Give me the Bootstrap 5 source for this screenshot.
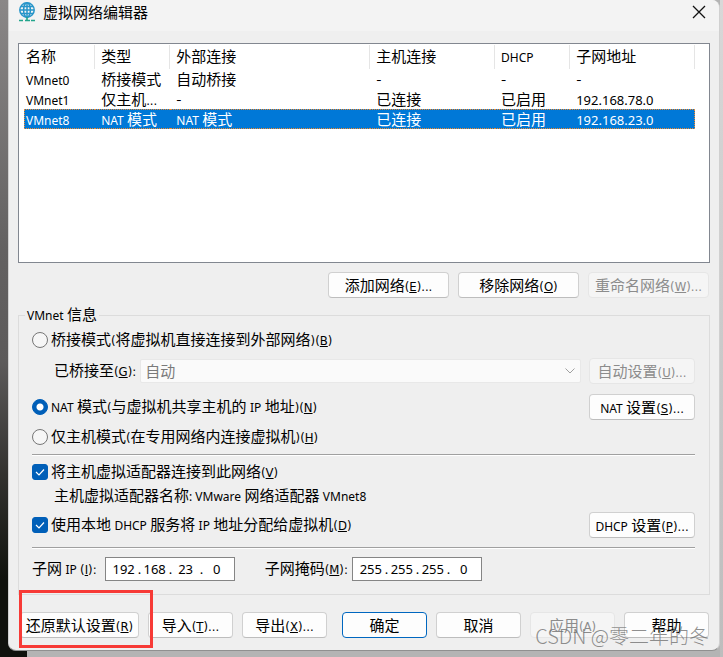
<!DOCTYPE html>
<html lang="zh-CN">
<head>
<meta charset="utf-8">
<meta name="viewport" content="width=device-width, initial-scale=1">
<title>虚拟网络编辑器</title>
<link href="https://cdn.jsdelivr.net/npm/bootstrap@5.3.0/dist/css/bootstrap.min.css" rel="stylesheet">
<style>
body{font-family:"Noto Sans CJK SC",sans-serif;font-size:15px;line-height:20px;color:#000;background:#b4b4b4}
.desk{background:linear-gradient(#8a8787,#636161 38%,#5c5a5a 55%,#33322f 72%,#10120d 88%,#10120d) left/27px 100% no-repeat,linear-gradient(#d8d8d8,#bdbdbd) right/3px 100% no-repeat;padding:0 3px 7px 8px;min-height:100vh}
.en{font-family:"Noto Sans","DejaVu Sans",sans-serif;font-size:12px;line-height:1}
.pn{font-family:"DejaVu Sans Condensed","DejaVu Sans",sans-serif;font-size:13px;line-height:1}
.num{font-family:"Noto Sans",sans-serif;font-size:13px;line-height:1}
.dlg{background:#efefef;border:1px solid #d0d0d0;border-top:0;border-bottom-color:#909090;border-radius:0 8px 8px 8px;overflow:hidden}
.tbar{background:#f3f3f3;height:31px;padding:0 13px 8px 9px}
.tname{gap:7px}
.btn-x{border:0;background:none;padding:0;line-height:0}
.dbody{padding:12px 9px 12px}
.listbox{border:1px solid #828790;background:#fff;min-height:220px;padding:1px 14px 0 5px}
.vtable{width:100%;table-layout:fixed;border-collapse:separate;border-spacing:0}
.vtable th{font-weight:400;height:24px;border-right:1px solid #e5e5e5;padding:0 0 2px 6px}
.vtable td{height:20px;padding:0 0 0 6px;white-space:nowrap;overflow:hidden;line-height:18px;border:1px solid transparent;border-width:1px 0}
.vtable th:first-child,.vtable td:first-child{padding-left:2px}
.vtable td>div{height:18px;line-height:17px}
.vtable .sel td{background:#0078d7;color:#fff;border-color:#f28a2c;border-style:dotted}
.vtable .sel td:first-child{border-left:1px dotted #f28a2c;padding-left:1px}
.vtable .sel td:last-child{border-right:1px dotted #f28a2c}
.wbtn{--bs-btn-padding-x:0;--bs-btn-padding-y:1px;--bs-btn-font-size:15px;--bs-btn-line-height:20px;--bs-btn-border-radius:4px;--bs-btn-color:#000;--bs-btn-bg:#fdfdfd;--bs-btn-border-color:#d0d0d0;--bs-btn-hover-bg:#e5f1fb;--bs-btn-disabled-color:#8c8c8c;--bs-btn-disabled-bg:#f5f5f5;--bs-btn-disabled-border-color:#e6e6e6;--bs-btn-disabled-opacity:1;--bs-btn-font-family:inherit;height:26px;border-bottom-color:#bdbdbd;white-space:nowrap}
.wbtn:disabled{border-bottom-color:#e6e6e6}
.wbtn.okb{border-color:#0067c0}
.w-net{width:121px}.w-set{width:106px}.w-foot{width:85px}.w-reset{width:119px}
.g9{gap:9px}
.netbar{padding:9px 1px 0 0}
.grp{border:1px solid #dcdcdc;padding:0 14px 13px 13px;margin-top:7px}
.grp legend{float:none;width:auto;font-size:15px;line-height:18px;margin:0 0 0 -7px;padding:0 2px;height:20px}
.r20{height:20px}.r22{height:22px}.r24{height:24px}.r26{height:26px}.r30{height:30px}.r32{height:32px}.r40{height:40px}
.grp label{line-height:18px;padding-bottom:2px}
.ck{flex:none;width:16px;height:16px;margin:0 3px 0 0;border:1px solid #767676;background-color:#f6f6f6}
.ck:checked{background-color:#005fb8;border-color:#005fb8}
.ck[type=checkbox]{border-radius:3px;background-size:14px}
.ck[type=checkbox]:checked{background-image:url("data:image/svg+xml,%3Csvg xmlns='http://www.w3.org/2000/svg' viewBox='0 0 14 14'%3E%3Cpath d='M3 7l3 3 5-5.500' fill='none' stroke='%23fff' stroke-width='1.200'/%3E%3C/svg%3E")}
.ck[type=radio]:checked{background-image:radial-gradient(#fff 3px,transparent 4px)}
.sub{padding-left:22px}
.drop{height:24px;padding:0 24px 1px 4px;font-size:15px;line-height:20px;color:#7a7a7a;border:1px solid #e8e8e8;border-radius:2px;background:#fafafa url("data:image/svg+xml,%3Csvg xmlns='http://www.w3.org/2000/svg' width='10' height='6'%3E%3Cpath d='M.5.5 5 5 9.500.5' fill='none' stroke='%23a0a0a0'/%3E%3C/svg%3E") no-repeat right 5px center/10px 6px}
.drop:disabled{background-color:#fafafa;opacity:1}
.rule{border:0;border-top:1px solid #a0a0a0;border-bottom:1px solid #fff;opacity:1;margin:7px 0 0;height:2px}
.t6{margin-top:6px}
.t9{margin-top:9px}
.ipbox{width:130px;height:24px;border:1px solid #858585;background:#fff;padding-left:4px}
.ipbox input{width:28px;border:0;padding:0;text-align:center;background:none;outline:0;line-height:20px}
.ipbox span{width:3px;text-align:center}
.ipfirst{margin-right:30px}
.redbox{position:absolute;left:10px;top:590px;width:134px;height:58px;border:3px solid #f73a36;pointer-events:none}
.wm{position:absolute;right:10px;bottom:1px;font-size:20px;line-height:26px;color:#6b6b6bc0;white-space:nowrap;pointer-events:none;font-weight:300}
.foot{padding:17px 1px 0 2px}
</style>
</head>
<body>
<div class="desk">
<main class="dlg position-relative">
<header class="tbar d-flex align-items-center justify-content-between">
  <div class="d-flex align-items-center tname">
    <svg width="18" height="20" viewBox="0 0 18 20" fill="none" aria-hidden="true"><g stroke="#2795c9" stroke-width="1.500"><circle cx="9" cy="8" r="7.200"/><ellipse cx="9" cy="8" rx="3.400" ry="7.200"/><path d="M2 8h14M3 4.500h12M3 11.500h12M9 1v14"/></g><path d="M1 18.500h4M7 18.500h5M13 18.500h4M9 15v3" stroke="#22a58c" stroke-width="1.600"/></svg>
    <span>虚拟网络编辑器</span>
  </div>
  <button class="btn-x" type="button" aria-label="关闭"><svg width="14" height="14" viewBox="0 0 14 14"><path d="M1 1l12 12M13 1L1 13" stroke="#111" stroke-width="1.300"/></svg></button>
</header>
<div class="dbody">
  <div class="listbox">
    <table class="vtable">
      <colgroup><col style="width:10.6%"><col style="width:11.2%"><col style="width:29.8%"><col style="width:18.6%"><col style="width:11.2%"><col style="width:18.6%"></colgroup>
      <thead><tr><th>名称</th><th>类型</th><th>外部连接</th><th>主机连接</th><th><span class="en">DHCP</span></th><th>子网地址</th></tr></thead>
      <tbody>
        <tr><td><div><span class="en">VMnet0</span></div></td><td><div>桥接模式</div></td><td><div>自动桥接</div></td><td><div>-</div></td><td><div>-</div></td><td><div>-</div></td></tr>
        <tr><td><div><span class="en">VMnet1</span></div></td><td><div>仅主机<span class="pn">...</span></div></td><td><div>-</div></td><td><div>已连接</div></td><td><div>已启用</div></td><td><div><span class="num">192.168.78.0</span></div></td></tr>
        <tr class="sel"><td><div><span class="en">VMnet8</span></div></td><td><div><span class="en">NAT</span> 模式</div></td><td><div><span class="en">NAT</span> 模式</div></td><td><div>已连接</div></td><td><div>已启用</div></td><td><div><span class="num">192.168.23.0</span></div></td></tr>
      </tbody>
    </table>
  </div>
  <div class="netbar d-flex justify-content-end g9">
    <button type="button" class="btn wbtn w-net">添加网络<span class="pn">(<u>E</u>)...</span></button>
    <button type="button" class="btn wbtn w-net">移除网络<span class="pn">(<u>O</u>)</span></button>
    <button type="button" class="btn wbtn w-net" disabled>重命名网络<span class="pn">(<u>W</u>)...</span></button>
  </div>
  <fieldset class="grp">
    <legend><span class="en">VMnet</span> 信息</legend>
    <div class="d-flex align-items-center r30">
      <input class="form-check-input ck" type="radio" name="mode" id="m1"><label for="m1">桥接模式<span class="pn">(</span>将虚拟机直接连接到外部网络<span class="pn">)(<u>B</u>)</span></label>
    </div>
    <div class="d-flex align-items-center r32 sub">
      <label for="br" class="text-nowrap me-1">已桥接至<span class="pn">(<u>G</u>):</span></label>
      <select id="br" class="form-select drop" disabled><option>自动</option></select>
      <button type="button" class="btn wbtn w-set flex-shrink-0 ms-2" disabled>自动设置<span class="pn">(<u>U</u>)...</span></button>
    </div>
    <div class="d-flex align-items-center r40">
      <input class="form-check-input ck" type="radio" name="mode" id="m2" checked><label for="m2"><span class="en">NAT</span> 模式<span class="pn">(</span>与虚拟机共享主机的 <span class="en">IP</span> 地址<span class="pn">)(<u>N</u>)</span></label>
      <button type="button" class="btn wbtn w-set ms-auto"><span class="en">NAT</span> 设置<span class="pn">(<u>S</u>)...</span></button>
    </div>
    <div class="d-flex align-items-center r20">
      <input class="form-check-input ck" type="radio" name="mode" id="m3"><label for="m3">仅主机模式<span class="pn">(</span>在专用网络内连接虚拟机<span class="pn">)(<u>H</u>)</span></label>
    </div>
    <hr class="rule">
    <div class="d-flex align-items-center r24 mt-1">
      <input class="form-check-input ck" type="checkbox" id="c1" checked><label for="c1">将主机虚拟适配器连接到此网络<span class="pn">(<u>V</u>)</span></label>
    </div>
    <div class="d-flex align-items-center r22 sub"><span>主机虚拟适配器名称<span class="en">: VMware</span> 网络适配器 <span class="en">VMnet8</span></span></div>
    <div class="d-flex align-items-center r26 t6">
      <input class="form-check-input ck" type="checkbox" id="c2" checked><label for="c2">使用本地 <span class="en">DHCP</span> 服务将 <span class="en">IP</span> 地址分配给虚拟机<span class="pn">(<u>D</u>)</span></label>
      <button type="button" class="btn wbtn w-set ms-auto"><span class="en">DHCP</span> 设置<span class="pn">(<u>P</u>)...</span></button>
    </div>
    <hr class="rule t9">
    <div class="d-flex align-items-center r24 mt-2">
      <label for="ip1" class="me-2">子网 <span class="en">IP</span> <span class="pn">(<u>I</u>):</span></label>
      <div class="ipbox ipfirst d-flex align-items-center num"><input id="ip1" value="192"><span>.</span><input aria-label="子网 IP 2" value="168"><span>.</span><input aria-label="子网 IP 3" value="23"><span>.</span><input aria-label="子网 IP 4" value="0"></div>
      <label for="mk1" class="me-1">子网掩码<span class="pn">(<u>M</u>):</span></label>
      <div class="ipbox d-flex align-items-center num"><input id="mk1" value="255"><span>.</span><input aria-label="子网掩码 2" value="255"><span>.</span><input aria-label="子网掩码 3" value="255"><span>.</span><input aria-label="子网掩码 4" value="0"></div>
    </div>
  </fieldset>
  <div class="foot d-flex justify-content-between">
    <div class="d-flex g9">
      <button type="button" class="btn wbtn w-reset">还原默认设置<span class="pn">(<u>R</u>)</span></button>
      <button type="button" class="btn wbtn w-foot">导入<span class="pn">(<u>T</u>)...</span></button>
      <button type="button" class="btn wbtn w-foot">导出<span class="pn">(<u>X</u>)...</span></button>
    </div>
    <div class="d-flex g9">
      <button type="button" class="btn wbtn w-foot okb">确定</button>
      <button type="button" class="btn wbtn w-foot">取消</button>
      <button type="button" class="btn wbtn w-foot" disabled>应用<span class="pn">(<u>A</u>)</span></button>
      <button type="button" class="btn wbtn w-foot">帮助</button>
    </div>
  </div>
</div>
<div class="redbox"></div>
<div class="wm">CSDN @零二年的冬</div>
</main>
</div>
<script src="https://cdn.jsdelivr.net/npm/bootstrap@5.3.0/dist/js/bootstrap.bundle.min.js"></script>
</body>
</html>
